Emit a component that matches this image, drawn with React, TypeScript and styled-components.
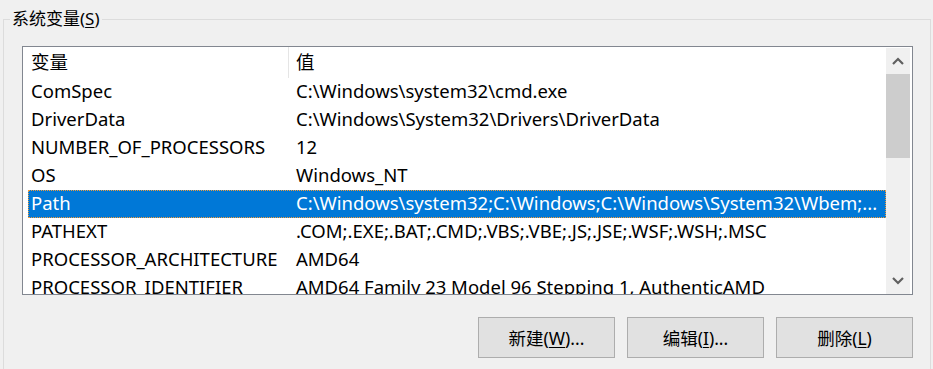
import React from 'react'
import styled, { createGlobalStyle } from 'styled-components'

const GlobalStyle = createGlobalStyle`
    html, body {
        margin : 0;
        padding : 0;
        background : #f0f0f0;
    }
    body {
        width : 933px;
        height : 369px;
        overflow : hidden;
        font-family : "Noto Sans", "Noto Sans CJK SC", sans-serif;
        color : #000;
    }
`

const Page = styled.div`
    padding : 9px 0 0 3px;
`

const GroupBox = styled.fieldset`
    margin : 0;
    padding : 0;
    width : 926px;
    min-height : 360px;
    border : 1px solid #dcdcdc;
    border-bottom : none;
`

const GroupLegend = styled.legend`
    margin-left : 6px;
    padding : 0 2px;
    font-size : 17px;
    line-height : 20px;
    color : #000;
`

const Key = styled.span`
    text-decoration : underline;
    text-underline-offset : 2px;
`

const ListBox = styled.div`
    margin : 17px 0 0 18px;
    width : 889px;
    height : 247px;
    border : 1px solid #828790;
    background : #fff;
    display : flex;
    overflow : hidden;
`

const ListBody = styled.div`
    flex : 1;
    padding-left : 5px;
    overflow : hidden;
`

const Row = styled.div<{ $selected?: boolean; $header?: boolean }>`
    display : grid;
    grid-template-columns : 261px 1fr;
    height : ${p => p.$header ? 31 : 28}px;
    align-items : center;
    font-size : 18.5px;
    white-space : nowrap;
    box-sizing : border-box;
    background : ${p => p.$selected ? '#0078d7' : 'transparent'};
    color : ${p => p.$selected ? '#fff' : '#000'};
    outline : ${p => p.$selected ? '1px dotted #f39c3a' : 'none'};
    outline-offset : -1px;
`

const Cell = styled.div<{ $first?: boolean; $header?: boolean }>`
    height : 100%;
    display : flex;
    align-items : center;
    padding-left : ${p => p.$first ? 3 : 7}px;
    padding-bottom : 3px;
    overflow : hidden;
    border-left : ${p => p.$header && !p.$first ? '1px solid #e5e5e5' : 'none'};
    box-sizing : border-box;
    margin-left : ${p => p.$header && !p.$first ? -1 : 0}px;
`

const ScrollBar = styled.div`
    width : 24px;
    margin : 1px 2px 0 0;
    background : #f0f0f0;
    display : flex;
    flex-direction : column;
`

const ArrowButton = styled.div`
    height : 26px;
    display : flex;
    align-items : center;
    justify-content : center;
    flex-shrink : 0;
`

const Thumb = styled.div`
    height : 84px;
    background : #cdcdcd;
`

const Track = styled.div`
    flex : 1;
`

const ButtonRow = styled.div`
    display : flex;
    justify-content : flex-end;
    gap : 12px;
    margin : 22px 0 0 18px;
    width : 891px;
`

const Button = styled.button`
    width : 137px;
    height : 41px;
    background : #e1e1e1;
    border : 1px solid #adadad;
    font-family : "Noto Sans", "Noto Sans CJK SC", sans-serif;
    font-size : 17.5px;
    color : #000;
    padding : 0;
`

const vars = [
    ['ComSpec', 'C:\\Windows\\system32\\cmd.exe'],
    ['DriverData', 'C:\\Windows\\System32\\Drivers\\DriverData'],
    ['NUMBER_OF_PROCESSORS', '12'],
    ['OS', 'Windows_NT'],
    ['Path', 'C:\\Windows\\system32;C:\\Windows;C:\\Windows\\System32\\Wbem;...'],
    ['PATHEXT', '.COM;.EXE;.BAT;.CMD;.VBS;.VBE;.JS;.JSE;.WSF;.WSH;.MSC'],
    ['PROCESSOR_ARCHITECTURE', 'AMD64'],
    ['PROCESSOR_IDENTIFIER', 'AMD64 Family 23 Model 96 Stepping 1, AuthenticAMD'],
]

function Chevron({ up }: { up?: boolean }) {
    return (
        <svg width="12" height="8" viewBox="0 0 12 8">
            <path d={up ? 'M1 7 L6 2 L11 7' : 'M1 1 L6 6 L11 1'} fill="none" stroke="#606060" strokeWidth="2.2" />
        </svg>
    )
}

function App() {
    return (
        <Page>
            <GlobalStyle />
            <GroupBox>
                <GroupLegend>系统变量(<Key>S</Key>)</GroupLegend>
                <ListBox>
                    <ListBody>
                        <Row $header>
                            <Cell $first $header>变量</Cell>
                            <Cell $header>值</Cell>
                        </Row>
                        {vars.map(([name, value]) => (
                            <Row key={name} $selected={name === 'Path'}>
                                <Cell $first>{name}</Cell>
                                <Cell>{value}</Cell>
                            </Row>
                        ))}
                    </ListBody>
                    <ScrollBar>
                        <ArrowButton><Chevron up /></ArrowButton>
                        <Thumb />
                        <Track />
                        <ArrowButton><Chevron /></ArrowButton>
                    </ScrollBar>
                </ListBox>
                <ButtonRow>
                    <Button>新建(<Key>W</Key>)...</Button>
                    <Button>编辑(<Key>I</Key>)...</Button>
                    <Button>删除(<Key>L</Key>)</Button>
                </ButtonRow>
            </GroupBox>
        </Page>
    )
}

export default App
